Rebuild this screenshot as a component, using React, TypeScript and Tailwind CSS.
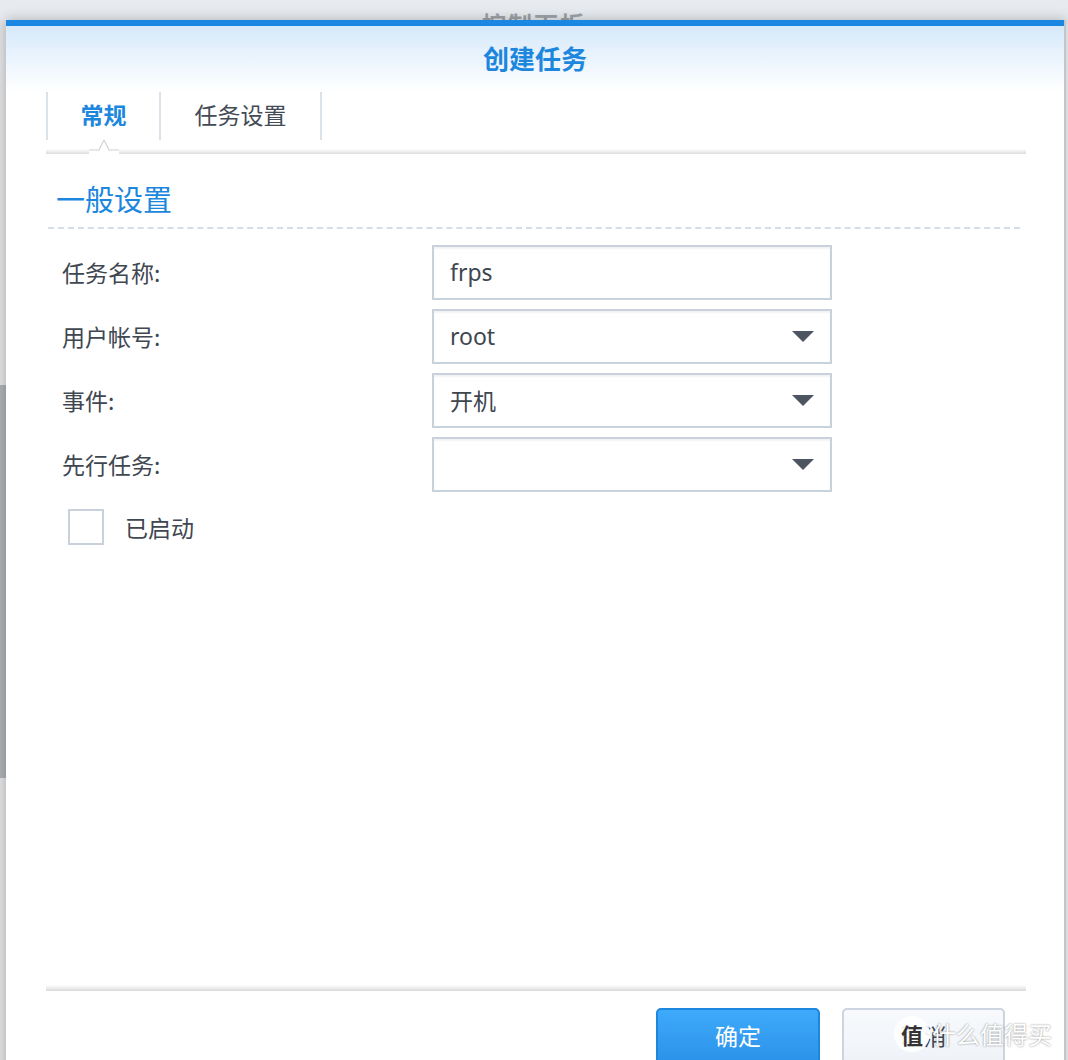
import React from 'react';

const cjk = { fontFamily: '"Noto Sans CJK SC", "Noto Sans", sans-serif' };
const latin = { fontFamily: '"Noto Sans", "Noto Sans CJK SC", sans-serif' };

const Caret = () => (
  <svg width="22" height="12" viewBox="0 0 22 12" className="shrink-0">
    <path d="M0 0 H22 L11 11 Z" fill="#4d5561" />
  </svg>
);

const Field: React.FC<{ label: string; value?: string; select?: boolean; latinValue?: boolean }> = ({
  label,
  value,
  select,
  latinValue,
}) => (
  <div className="flex items-center h-[55px]">
    <div className="w-[376px] text-[23px] text-[#3f4751] pl-[6px]" style={cjk}>
      {label}
    </div>
    <div className="w-[400px] h-[55px] border-2 border-[#c9d1dc] bg-white shadow-[inset_0_2px_2px_rgba(0,0,0,0.05)] flex items-center justify-between pl-[16px] pr-[16px]">
      <span className="text-[23px] text-[#3e4650]" style={latinValue ? latin : cjk}>
        {value}
      </span>
      {select && <Caret />}
    </div>
  </div>
);

const App: React.FC = () => {
  return (
    <div className="relative w-[1068px] h-[1060px] overflow-hidden bg-[#e7eaee]" style={cjk}>
      {/* window behind the dialog */}
      <div className="absolute left-0 right-0 top-[6px] flex justify-center">
        <span className="text-[24px] font-bold text-[#9ea3a9] tracking-[2px]">控制面板</span>
      </div>

      <div className="relative flex pt-[20px] h-full">
        {/* left strip of the window behind */}
        <div className="w-[6px] flex flex-col">
          <div className="h-[365px] bg-[#e2e3e5]" />
          <div className="h-[393px] bg-[#adb0b4]" />
          <div className="flex-1 bg-[#e2e3e5]" />
        </div>

        {/* dialog */}
        <div className="w-[1060px] h-[1060px] bg-white flex flex-col shadow-[0_0_12px_rgba(0,0,0,0.25)] border-r-2 border-[#c4c6c9]">
          <div className="h-[6px] bg-[#1a88e3]" />
          <div className="h-[66px] pb-[4px] bg-gradient-to-b from-[#d6e9fa] to-white flex items-center justify-center">
            <span className="text-[26px] font-bold text-[#1c87dd]">创建任务</span>
          </div>

          {/* tabs */}
          <div className="ml-[40px] w-[980px] relative">
            <div className="flex h-[48px]">
              <div className="w-[115px] pb-[4px] border-l-2 border-r-2 border-[#dbe2ea] flex items-center justify-center text-[23px] font-bold text-[#1c87dd]">
                常规
              </div>
              <div className="w-[161px] pb-[4px] border-r-2 border-[#dbe2ea] flex items-center justify-center text-[23px] text-[#434b55]">
                任务设置
              </div>
            </div>
            <div className="h-[9px]" />
            <div className="h-[5px] bg-gradient-to-b from-[#ffffff] to-[#dcdcdc]" />
            <svg className="absolute left-[43px] top-[48px]" width="30" height="14" viewBox="0 0 30 14">
              <path d="M0 10 L10 10 L15 0 L20 10 L30 10 L30 14 L0 14 Z" fill="#ffffff" />
              <path d="M0 10 L10 10 L15 0 L20 10 L30 10" fill="none" stroke="#d2d2d2" strokeWidth="1.2" />
            </svg>
          </div>

          {/* section */}
          <div className="ml-[50px] mt-[26px] text-[29px] text-[#1c87dd] leading-[36px]">一般设置</div>
          <div className="ml-[42px] w-[972px] mt-[11px] border-t-2 border-dashed border-[#d5dde8]" />

          <div className="ml-[50px] mt-[16px] flex flex-col gap-[9px]">
            <Field label="任务名称:" value="frps" latinValue />
            <Field label="用户帐号:" value="root" select latinValue />
            <Field label="事件:" value="开机" select />
            <Field label="先行任务:" value="" select />
          </div>

          <div className="ml-[62px] mt-[17px] flex items-center">
            <div className="w-[36px] h-[36px] border-2 border-[#c9d1dc] bg-white" />
            <span className="ml-[21px] text-[23px] text-[#3f4751]">已启动</span>
          </div>

          <div className="flex-1" />

          {/* footer */}
          <div className="ml-[40px] w-[980px] h-[6px] bg-gradient-to-b from-[#ffffff] to-[#dadada]" />
          <div className="h-[17px]" />
          <div className="flex justify-end gap-[22px] pr-[59px] h-[72px]">
            <button className="w-[164px] h-[60px] rounded-[5px] border-2 border-[#1f86de] bg-gradient-to-b from-[#3eaafa] to-[#2a90e8] text-white text-[23px] flex items-start justify-center pt-[8px]">
              确定
            </button>
            <button className="w-[163px] h-[60px] rounded-[5px] border-2 border-[#ccd4df] bg-gradient-to-b from-[#f8fafd] to-[#eef2f7] text-[#3f4751] text-[23px] flex items-start justify-center pt-[8px]">
              取消
            </button>
          </div>
        </div>
        <div className="flex-1 bg-[#d9dbde]" />
      </div>

      {/* watermark */}
      <div className="absolute left-[894px] top-[1016px] flex items-center">
        <div className="w-[36px] h-[36px] rounded-full bg-white/90 flex items-center justify-center text-[22px] text-[#333] font-bold">
          值
        </div>
        <span className="ml-[2px] text-[24px] text-white [text-shadow:0_0_2px_rgba(0,0,0,0.5)]">什么值得买</span>
      </div>
    </div>
  );
};

export default App;
